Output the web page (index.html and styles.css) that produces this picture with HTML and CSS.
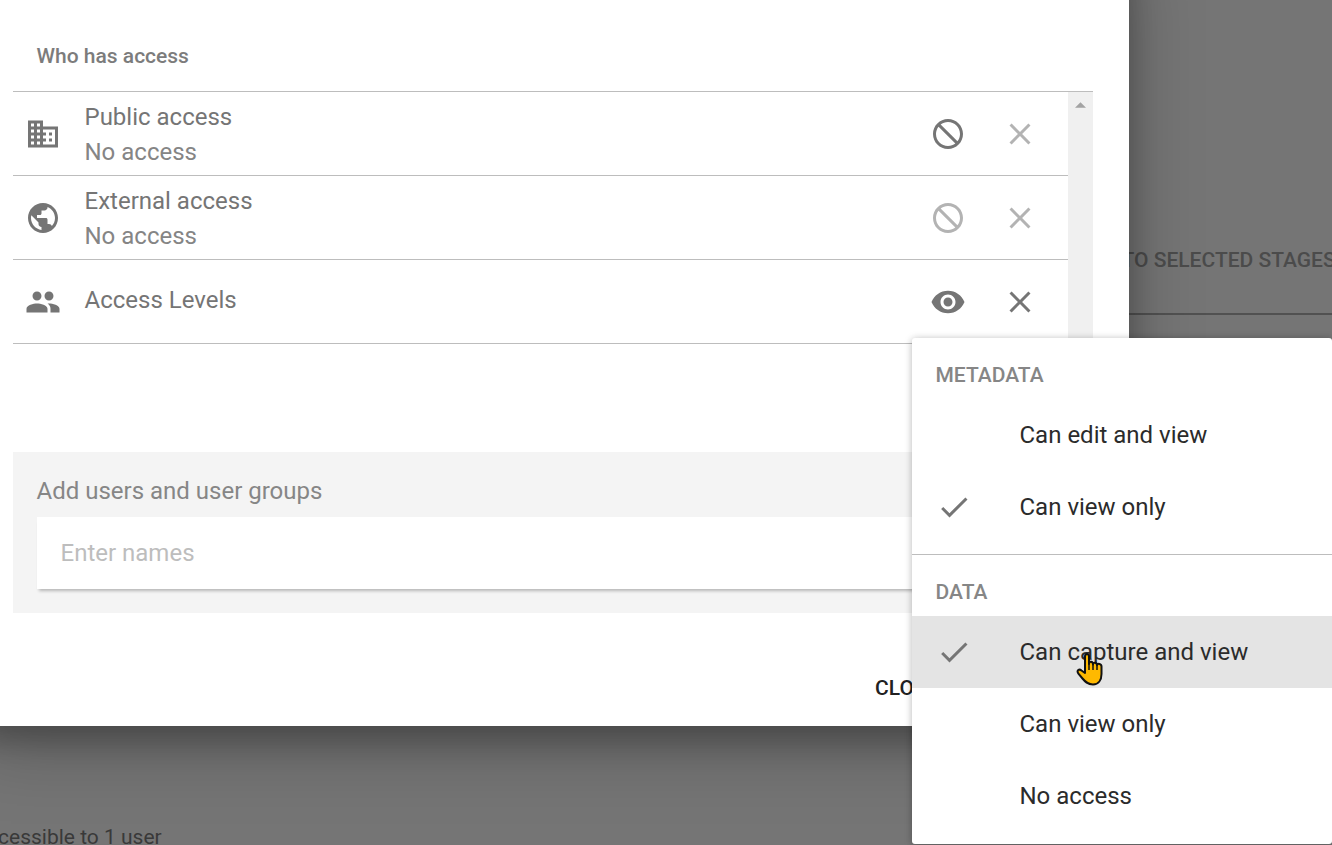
FILE: index.html
```
<!DOCTYPE html>
<html lang="en">
<head>
<meta charset="utf-8">
<title>Sharing settings</title>
<link rel="stylesheet" href="styles.css">
</head>
<body>
<div class="page">
  <div class="page-tabs"><span class="page-tab">TO SELECTED STAGES</span></div>
  <div class="page-note">cessible to 1 user</div>
</div>

<div class="dialog">
  <h2 class="heading">Who has access</h2>
  <div class="access">
    <div class="rows">
      <div class="row">
        <svg class="icon" viewBox="0 0 24 24"><path d="M12 7V3H2v18h20V7H12zM6 19H4v-2h2v2zm0-4H4v-2h2v2zm0-4H4V9h2v2zm0-4H4V5h2v2zm4 12H8v-2h2v2zm0-4H8v-2h2v2zm0-4H8V9h2v2zm0-4H8V5h2v2zm10 12h-8v-2h2v-2h-2v-2h2v-2h-2V9h8v10zm-2-8h-2v2h2v-2zm0 4h-2v2h2v-2z"/></svg>
        <div class="label two-line"><span>Public access</span><span class="sub">No access</span></div>
        <svg class="icon" viewBox="0 0 24 24"><path d="M12 2C6.48 2 2 6.48 2 12s4.48 10 10 10 10-4.48 10-10S17.52 2 12 2zM4 12c0-4.42 3.58-8 8-8 1.85 0 3.55.63 4.9 1.69L5.69 16.9C4.63 15.55 4 13.85 4 12zm8 8c-1.85 0-3.55-.63-4.9-1.69L18.31 7.1C19.37 8.45 20 10.15 20 12c0 4.42-3.58 8-8 8z" transform="matrix(-1 0 0 1 24 0)"/></svg>
        <svg class="icon off" viewBox="0 0 24 24"><path d="M19 6.41L17.59 5 12 10.59 6.41 5 5 6.41 10.59 12 5 17.59 6.41 19 12 13.41 17.59 19 19 17.59 13.41 12z"/></svg>
      </div>
      <div class="row">
        <svg class="icon" viewBox="0 0 24 24"><path d="M12 2C6.48 2 2 6.48 2 12s4.48 10 10 10 10-4.48 10-10S17.52 2 12 2zm-1 17.93c-3.95-.49-7-3.85-7-7.93 0-.62.08-1.21.21-1.79L9 15v1c0 1.1.9 2 2 2v1.93zm6.9-2.54c-.26-.81-1-1.39-1.9-1.39h-1v-3c0-.55-.45-1-1-1H8v-2h2c.55 0 1-.45 1-1V7h2c1.1 0 2-.9 2-2v-.41c2.93 1.19 5 4.06 5 7.41 0 2.08-.8 3.97-2.1 5.39z"/></svg>
        <div class="label two-line"><span>External access</span><span class="sub">No access</span></div>
        <svg class="icon off" viewBox="0 0 24 24"><path d="M12 2C6.48 2 2 6.48 2 12s4.48 10 10 10 10-4.48 10-10S17.52 2 12 2zM4 12c0-4.42 3.58-8 8-8 1.85 0 3.55.63 4.9 1.69L5.69 16.9C4.63 15.55 4 13.85 4 12zm8 8c-1.85 0-3.55-.63-4.9-1.69L18.31 7.1C19.37 8.45 20 10.15 20 12c0 4.42-3.58 8-8 8z" transform="matrix(-1 0 0 1 24 0)"/></svg>
        <svg class="icon off" viewBox="0 0 24 24"><path d="M19 6.41L17.59 5 12 10.59 6.41 5 5 6.41 10.59 12 5 17.59 6.41 19 12 13.41 17.59 19 19 17.59 13.41 12z"/></svg>
      </div>
      <div class="row">
        <svg class="icon" viewBox="0 0 24 24"><path d="M16 11c1.66 0 2.99-1.34 2.99-3S17.66 5 16 5c-1.66 0-3 1.34-3 3s1.34 3 3 3zm-8 0c1.66 0 2.99-1.34 2.99-3S9.66 5 8 5C6.34 5 5 6.34 5 8s1.34 3 3 3zm0 2c-2.33 0-7 1.17-7 3.5V19h14v-2.500c0-2.330-4.670-3.500-7-3.500zm8 0c-.29 0-.62.02-.97.05 1.160.84 1.970 1.970 1.970 3.450V19h6v-2.500c0-2.330-4.670-3.500-7-3.500z"/></svg>
        <div class="label"><span>Access Levels</span></div>
        <svg class="icon" viewBox="0 0 24 24"><path d="M12 4.500C7 4.500 2.730 7.610 1 12c1.730 4.390 6 7.500 11 7.500s9.270-3.110 11-7.500c-1.730-4.390-6-7.500-11-7.500zM12 17c-2.760 0-5-2.240-5-5s2.240-5 5-5 5 2.240 5 5-2.240 5-5 5zm0-8c-1.660 0-3 1.340-3 3s1.340 3 3 3 3-1.340 3-3-1.340-3-3-3z"/></svg>
        <svg class="icon" viewBox="0 0 24 24"><path d="M19 6.41L17.59 5 12 10.59 6.41 5 5 6.41 10.59 12 5 17.59 6.41 19 12 13.41 17.59 19 19 17.59 13.41 12z"/></svg>
      </div>
    </div>
    <div class="scrollbar"><svg class="arrow" viewBox="0 0 12 6"><path d="M6 0L12 6H0z"/></svg></div>
  </div>
  <div class="add">
    <div class="add-title">Add users and user groups</div>
    <div class="field">Enter names</div>
  </div>
  <div class="actions"><span class="close">CLOSE</span></div>
</div>

<div class="menu">
  <div class="menu-head">METADATA</div>
  <div class="item">Can edit and view</div>
  <div class="item"><svg class="icon check" viewBox="0 0 24 24"><path d="M9 16.170L4.830 12l-1.420 1.410L9 19 21 7l-1.410-1.410z"/></svg>Can view only</div>
  <div class="divider"></div>
  <div class="menu-head">DATA</div>
  <div class="item selected"><svg class="icon check" viewBox="0 0 24 24"><path d="M9 16.170L4.830 12l-1.420 1.410L9 19 21 7l-1.410-1.410z"/></svg>Can capture and view</div>
  <div class="item">Can view only</div>
  <div class="item">No access</div>
</div>

<svg class="pointer" viewBox="0 0 28 35"><path d="M9 21V4.500C9 1 13 1 13 4.500V12C13 9 17 9 17 12.500C17 9.800 21 10 21 13.300C21.500 11 25.500 11.500 25.500 14.500V22C25.500 28 22.500 32.500 17 32.500C11.500 32.500 9 29.500 6.500 26.500L2.200 21.300C.500 18.500 3 16.500 5.500 18.500Z"/><path class="fingers" d="M13 11.500V18M17 12.500V18M21 13.500V18"/></svg>
</body>
</html>
```
FILE: styles.css
```
* { box-sizing: border-box; }

body {
  position: relative;
  width: 1332px;
  height: 845px;
  margin: 0;
  overflow: hidden;
  background: #757575;
  font-family: Roboto, "Liberation Sans", sans-serif;
  font-size: 24px;
  line-height: 36px;
}

.page {
  display: flex;
  flex-direction: column;
  justify-content: space-between;
  height: 855px;
}

.page-tabs {
  height: 315px;
  padding: 242px 0 0 1121.5px;
  border-bottom: 2px solid #515151;
  color: #4b4b4b;
  font-size: 21px;
  font-weight: 500;
  white-space: nowrap;
}

.page-note {
  margin-left: -2px;
  color: #393939;
  font-size: 21px;
}

.dialog {
  position: absolute;
  top: -60px;
  left: -23px;
  width: 1152px;
  height: 786px;
  padding: 60px 36px 0;
  background: #fff;
  box-shadow: 0 21px 68px rgba(0, 0, 0, 0.25), 0 15px 27px rgba(0, 0, 0, 0.22);
}

.heading {
  height: 92px;
  margin: 0;
  padding: 38px 23.5px 0;
  border-bottom: 1px solid #bdbdbd;
  color: #7c7c7c;
  font-size: 21px;
  font-weight: 500;
}

.access {
  display: flex;
  height: 312px;
}

.rows { flex: 1; }

.row {
  display: flex;
  align-items: center;
  height: 84px;
  padding: 1px 30px 0 12px;
  border-bottom: 1px solid #bdbdbd;
}

.icon {
  flex: none;
  width: 36px;
  height: 36px;
  fill: #757575;
}

.icon + .icon { margin-left: 36px; }

.off { fill: #b3b3b3; }

.label {
  display: flex;
  flex: 1;
  flex-direction: column;
  padding: 0 0 3px 23.5px;
  color: #757575;
  line-height: 35px;
}

.two-line { padding: 1px 0 0 23.5px; }

.sub { color: #858585; }

.scrollbar {
  width: 25px;
  padding: 10px 0 0 7px;
  background: #f0f0f0;
}

.arrow {
  display: block;
  width: 11px;
  height: 6px;
  fill: #a3a3a3;
}

.add {
  height: 161px;
  margin-top: 48px;
  padding: 21px 24px 24px;
  background: #f4f4f4;
}

.add-title {
  height: 44px;
  margin-left: -0.5px;
  color: #868686;
}

.field {
  height: 72px;
  padding: 18px 23.5px;
  background: #fff;
  box-shadow: 0 4px 3px -2px rgba(0, 0, 0, 0.25);
  color: #bdbdbd;
}

.actions {
  display: flex;
  padding: 57px 0 0 862px;
}

.close {
  color: #212121;
  font-size: 21px;
  font-weight: 500;
}

.menu {
  position: absolute;
  top: 338px;
  left: 912px;
  width: 420px;
  height: 506px;
  border-radius: 3px;
  background: #fff;
  box-shadow: 0 1px 9px rgba(0, 0, 0, 0.18), 0 1px 6px rgba(0, 0, 0, 0.12);
  color: #2b2b2b;
}

.menu-head {
  height: 61px;
  padding: 19px 23.5px 0;
  color: #868686;
  font-size: 21px;
  font-weight: 500;
}

.item {
  display: flex;
  align-items: center;
  height: 72px;
  padding-left: 107.5px;
}

.check { margin: 0 48px 0 -84px; }

.selected { background: #e4e4e4; }

.divider {
  height: 12px;
  border-bottom: 1px solid #bdbdbd;
}

.pointer {
  position: absolute;
  top: 652px;
  left: 1076px;
  width: 28px;
  height: 35px;
  fill: #ffb900;
  stroke: #111;
  stroke-width: 2;
  stroke-linejoin: round;
}

.fingers {
  fill: none;
  stroke-width: 1.5;
}
```
